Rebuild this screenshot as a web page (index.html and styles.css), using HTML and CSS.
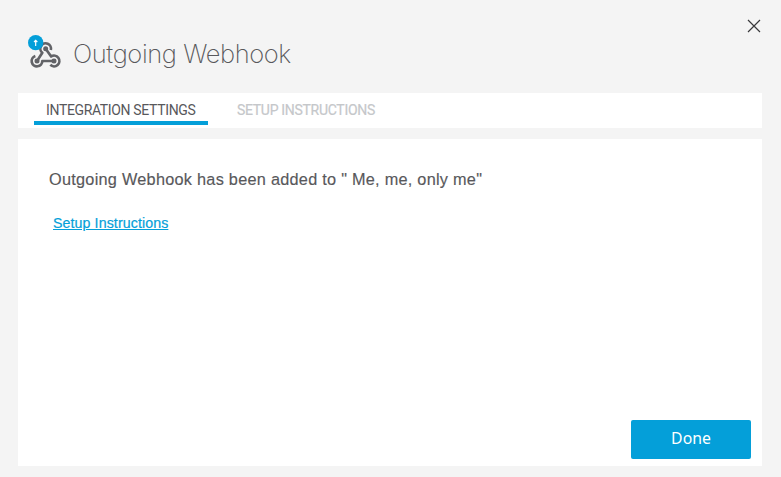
FILE: index.html
```html
<!DOCTYPE html>
<html lang="en">
<head>
<meta charset="utf-8">
<title>Outgoing Webhook</title>
<link rel="stylesheet" href="styles.css">
</head>
<body>
<main class="dialog">
  <header class="header">
    <svg class="logo" viewBox="20 15 105 110" aria-hidden="true">
      <g class="hook">
        <path d="M50 99L66 74.5A16 16 0 1 1 91.5 66"/>
        <path d="M76 62L92.5 85.5A16 16 0 1 1 90 110.5"/>
        <path d="M101 99H66A16 16 0 1 1 45 83.8"/>
      </g>
      <g class="joints"><circle cx="76" cy="62" r="7.5"/><circle cx="50" cy="99" r="7.5"/><circle cx="101" cy="99" r="7.5"/></g>
      <circle class="badge" cx="46" cy="44" r="23"/>
      <path class="arrow" d="M46 54V37M41 42L46 37L51 42"/>
    </svg>
    <h1 class="title">Outgoing Webhook</h1>
    <button class="close" aria-label="Close"><svg viewBox="0 0 14 14"><path d="M1 1L13 13M13 1L1 13"/></svg></button>
  </header>
  <nav class="tabs">
    <a class="tab active"><span>INTEGRATION SETTINGS</span></a>
    <a class="tab second"><span>SETUP INSTRUCTIONS</span></a>
  </nav>
  <section class="panel">
    <p class="message">Outgoing Webhook has been added to " Me, me, only me"</p>
    <a class="link" href="#">Setup Instructions</a>
    <button class="done">Done</button>
  </section>
</main>
</body>
</html>
```
FILE: styles.css
```css
* { box-sizing: border-box; }
body { margin: 0; background: #f4f4f4; font-family: "Liberation Sans", Arial, sans-serif; }
.dialog { height: 477px; padding: 0 19px 11px 18px; display: flex; flex-direction: column; }
.header { height: 93px; display: flex; align-items: flex-start; }
.logo { width: 35px; height: 36.67px; margin: 33px 0 0 9px; flex: none; }
.hook { fill: none; stroke: #626367; stroke-width: 8; stroke-linejoin: round; }
.joints { fill: #626367; }
.badge { fill: #049fd9; }
.arrow { fill: none; stroke: #fff; stroke-width: 3.5; }
.title { margin: 36px 0 0 11px; font: 200 25.5px/36px Inter, sans-serif; color: #58585b; letter-spacing: -0.4px; white-space: nowrap; }
.close { margin: 19px 1px 0 auto; padding: 0; width: 14px; height: 14px; border: 0; background: none; }
.close svg { display: block; width: 14px; height: 14px; fill: none; stroke: #39393b; stroke-width: 1.2; }
.tabs { height: 35px; background: #fff; display: flex; padding-left: 16px; flex: none; }
.tab { height: 32px; padding: 0 12px; font: 14px/34px Roboto, sans-serif; color: #58585b; white-space: nowrap; }
.active { width: 174px; border-bottom: 4px solid #049fd9; letter-spacing: -0.35px; }
.second { margin-left: 17px; color: #c5c7ca; -webkit-text-stroke: 0.2px #c5c7ca; letter-spacing: -0.3px; }
.panel { margin-top: 11px; background: #fff; flex: 1; display: flex; flex-direction: column; align-items: flex-start; padding: 29px 11px 7px 31px; }
.message { margin: 0; font-size: 16.3px; line-height: 22px; color: #58585b; letter-spacing: 0.26px; -webkit-text-stroke: 0.15px #58585b; white-space: nowrap; }
.link { margin: 23px 0 0 4px; font-size: 14.2px; line-height: 20px; letter-spacing: 0.1px; color: #049fd9; -webkit-text-stroke: 0.2px #049fd9; }
.done { margin: auto 0 0 auto; width: 120px; height: 39px; border: 0; border-radius: 2px; background: #049fd9; color: #fff; font: 400 15.8px/36px "Noto Sans", sans-serif; padding: 0 0 3px; }
```
